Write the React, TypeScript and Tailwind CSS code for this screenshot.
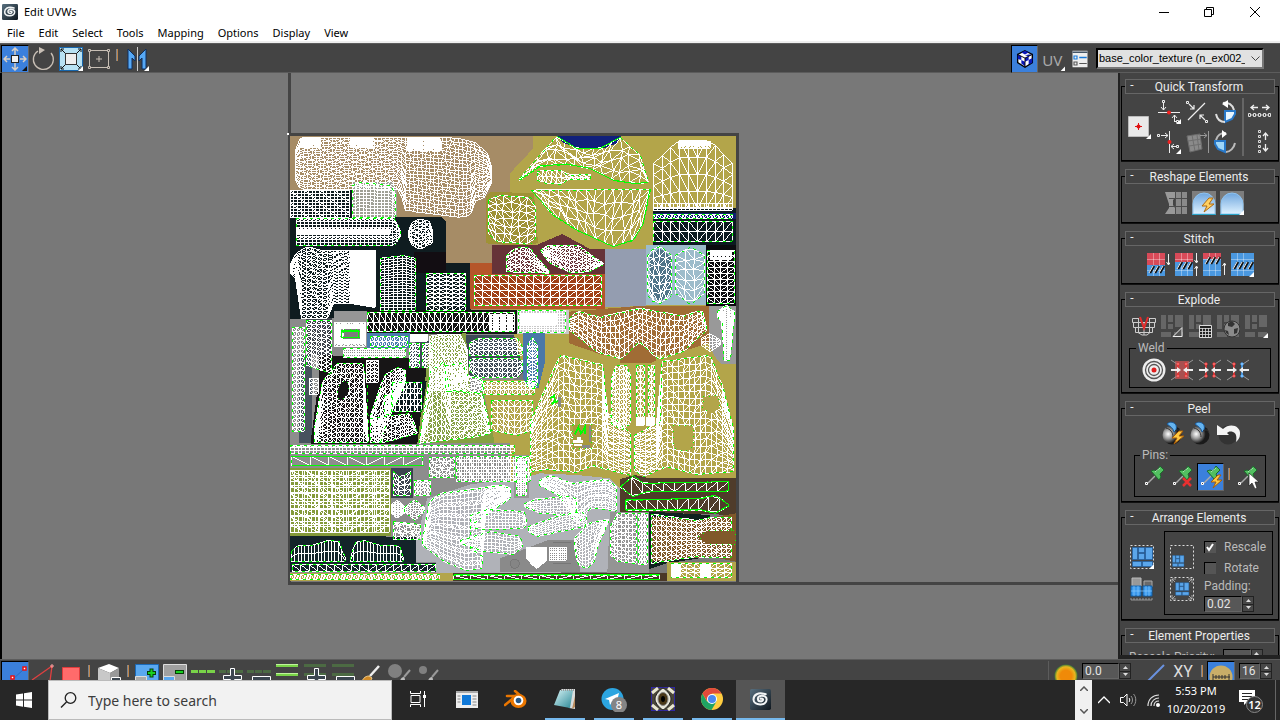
import React from "react";

type Pt = [number, number];
const parse = (s: string): Pt[] => s.split(" ").map((p) => p.split(",").map(Number) as Pt);

function yAt(line: Pt[], x: number) {
  for (let i = 1; i < line.length; i++) {
    if (x <= line[i][0]) {
      const [x0, y0] = line[i - 1];
      const [x1, y1] = line[i];
      return x1 === x0 ? y1 : y0 + ((y1 - y0) * (x - x0)) / (x1 - x0);
    }
  }
  return line[line.length - 1][1];
}

/* A shell is a mesh stretched between an upper and a lower edge.
   origin, upper edge, lower edge, columns, rows, diagonals (every nth cell), green seam, jitter */
type Shell = [string, string, string, number, number, number, number, number];
const ORIGIN: Record<string, string> = {
  A: "translate(0 0)",
  B: "translate(678 0)",
  C: "translate(0 675)",
  D: "translate(678 675)",
};

const SHELLS: Shell[] = [
  ["A", "35,60 50,22 500,22 570,35 610,70 622,110", "35,150 50,178 350,178 358,240 430,250 520,262 560,258 568,215 600,205 622,160", 48, 22, 0, 0, 2],
  ["A", "50,24 110,24", "50,52 110,52", 18, 7, 0, 0, 0],
  ["A", "200,24 270,24", "200,52 270,52", 22, 7, 0, 0, 0],
  ["A", "370,24 470,24", "370,60 470,60", 30, 9, 0, 0, 0],
  ["A", "18,182 195,182", "18,262 195,262", 16, 9, 4, 0, 0],
  ["A", "205,165 225,158 320,165 335,190", "205,262 335,262", 12, 11, 0, 1, 0],
  ["A", "36,265 330,265 348,300", "36,347 330,347 348,320", 26, 9, 3, 1, 0],
  ["A", "36,298 320,298", "36,312 320,312", 90, 4, 0, 0, 0],
  ["A", "372,305 385,275 410,268 435,275 446,300", "372,320 385,350 410,356 446,340", 7, 10, 2, 0, 1],
  ["A", "20,400 45,360 75,350 110,360 275,360", "20,430 36,445 38,565 135,565 140,520 220,520 275,532", 16, 18, 1, 0, 1],
  ["A", "200,365 272,365", "200,520 272,532", 24, 50, 0, 0, 0],
  ["A", "288,385 360,376 395,385", "288,540 395,540", 8, 20, 0, 1, 0],
  ["A", "428,430 545,430", "428,540 545,540", 6, 9, 1, 1, 0],
  ["A", "570,437 953,437", "570,525 953,525", 15, 4, 1, 1, 0],
  ["A", "250,547 690,547", "250,605 690,605", 24, 2, 1, 1, 0],
  ["A", "620,552 690,552", "620,600 690,600", 20, 6, 0, 0, 0],
  ["A", "150,578 245,578", "150,648 245,648", 9, 9, 1, 0, 1],
  ["A", "258,618 370,618", "258,650 370,650", 9, 2, 1, 1, 0],
  ["A", "25,592 62,592", "25,905 62,905", 3, 24, 1, 1, 0],
  ["A", "68,570 142,570", "68,705 142,730", 5, 11, 1, 1, 0],
  ["A", "178,655 365,655", "178,683 365,683", 32, 6, 0, 1, 0],
  ["A", "375,640 405,640", "375,712 405,712", 3, 7, 1, 1, 0],
  ["A", "415,640 445,640", "415,712 445,712", 3, 7, 1, 1, 0],
  ["A", "380,612 430,612", "380,634 430,634", 15, 7, 0, 0, 0],
  ["A", "435,620 470,612 530,612 550,660", "430,780 550,780", 12, 15, 1, 0, 1],
  ["A", "555,640 580,624 700,624 715,650", "555,675 580,675 700,675 715,675", 11, 4, 1, 1, 0],
  ["A", "555,690 580,684 700,684 715,690", "555,720 580,742 700,742 715,720", 11, 4, 1, 1, 0],
  ["A", "612,210 640,196 740,202 753,230", "612,310 640,335 740,342 753,325", 6, 6, 1, 1, 3],
  ["A", "666,375 700,352 735,352 795,425", "666,425 795,430", 9, 6, 1, 1, 1],
  ["B", "28,145 140,20 145,22 200,55 270,55 330,22 390,75 415,158", "28,150 90,108 170,102 240,115 310,150 370,160 415,158", 14, 4, 1, 1, 6],
  ["B", "82,125 110,120 155,122 175,135 240,134", "82,150 110,160 155,162 175,148 240,148", 11, 2, 1, 1, 0],
  ["B", "65,180 420,178", "65,182 130,255 200,300 310,350 370,330 400,280 420,178", 13, 4, 1, 1, 5],
  ["B", "430,100 505,32 600,32 668,100", "430,235 668,235", 9, 4, 1, 0, 0],
  ["B", "505,34 600,34", "505,54 600,54", 12, 3, 1, 0, 0],
  ["B", "430,220 668,220", "430,242 668,242", 20, 2, 0, 0, 0],
  ["B", "430,252 668,252", "430,264 668,264", 22, 1, 1, 1, 0],
  ["B", "430,273 668,273", "430,333 668,333", 9, 2, 1, 1, 0],
  ["B", "90,360 120,345 200,345 280,400", "90,362 120,400 180,428 240,425 280,402", 15, 7, 1, 1, 1],
  ["B", "412,380 422,360 450,350 485,375", "412,485 422,510 450,520 485,495", 4, 6, 1, 1, 2],
  ["B", "497,375 540,350 582,375", "497,490 540,522 582,490", 3, 5, 1, 1, 2],
  ["B", "592,360 672,360", "592,520 672,520", 4, 9, 1, 1, 0],
  ["B", "600,360 665,360", "600,388 665,388", 16, 8, 0, 0, 0],
  ["B", "25,542 165,542", "25,608 165,608", 18, 8, 0, 1, 0],
  ["B", "30,552 140,552", "30,585 140,585", 36, 11, 0, 0, 0],
  ["B", "178,565 205,545 270,562 390,535 520,558 575,540 590,590", "178,600 260,665 335,688 388,635 445,688 520,665 590,600", 30, 7, 2, 1, 1],
  ["B", "575,625 600,610 630,630", "575,645 600,668 630,645", 5, 5, 0, 0, 0],
  ["B", "622,545 650,525 672,545", "622,560 638,580 640,690 660,690 672,560", 12, 30, 0, 1, 0],
  ["B", "52,645 66,622 82,645", "52,770 68,775 82,770", 2, 14, 1, 1, 0],
  ["C", "90,220 115,80 160,25 238,25 250,100 252,260", "90,262 252,262", 12, 16, 1, 1, 1],
  ["C", "258,180 300,60 340,38 365,45", "258,262 290,262 310,195 365,85", 7, 10, 1, 1, 1],
  ["C", "258,190 380,176 400,235", "258,262 300,262 400,235", 11, 6, 1, 1, 1],
  ["C", "248,15 282,15", "248,82 282,82", 3, 6, 1, 0, 0],
  ["C", "325,82 412,82", "325,168 412,168", 8, 5, 2, 1, 0],
  ["C", "302,122 322,122", "302,178 322,178", 4, 8, 0, 1, 0],
  ["C", "405,262 440,50 480,20 495,110 595,115 620,232", "405,264 560,248 620,234", 16, 11, 1, 1, 1],
  ["C", "485,30 535,25 550,60 595,75", "485,108 530,105 560,115 595,110", 10, 8, 2, 1, 2],
  ["C", "598,78 750,78", "598,118 750,118", 12, 3, 1, 1, 0],
  ["C", "622,135 745,135", "622,225 700,240 745,225", 7, 5, 1, 1, 0],
  ["C", "75,70 102,70", "75,118 102,118", 2, 4, 1, 0, 0],
  ["C", "20,270 690,270", "20,295 690,295", 60, 3, 3, 1, 0],
  ["C", "22,305 415,305", "22,332 415,332", 7, 1, 1, 1, 0],
  ["C", "435,308 510,308", "435,368 510,368", 7, 6, 2, 1, 2],
  ["C", "518,305 740,305", "518,380 740,380", 30, 8, 4, 1, 0],
  ["C", "20,345 315,345", "20,532 315,532", 24, 11, 4, 1, 0],
  ["C", "20,345 315,345", "20,532 315,532", 7, 8, 1, 0, 0],
  ["C", "328,350 350,368 378,350", "328,422 378,422", 3, 4, 1, 1, 0],
  ["C", "390,375 440,375", "390,420 440,420", 5, 4, 1, 1, 1],
  ["C", "322,450 340,435 362,455", "322,475 340,490 362,475", 9, 9, 0, 0, 0],
  ["C", "362,458 392,432 422,458", "362,470 392,496 422,470", 7, 7, 0, 1, 1],
  ["C", "328,500 410,508", "328,552 410,552", 8, 6, 3, 1, 3],
  ["C", "22,590 45,570 85,570 140,556 165,560 183,610", "22,620 183,620", 16, 2, 0, 1, 0],
  ["C", "200,610 215,562 240,556 290,572 345,572 358,610", "200,620 358,620", 16, 2, 0, 1, 0],
  ["C", "25,627 455,627", "25,650 455,650", 17, 1, 1, 1, 0],
  ["C", "20,658 465,658", "20,674 465,674", 44, 1, 3, 1, 0],
  ["C", "508,660 1125,660", "508,674 1125,674", 12, 1, 1, 1, 0],
  ["C", "415,555 435,440 470,415 650,390 680,400", "415,570 480,620 545,645 595,640 595,605 560,580 560,510 680,430", 21, 20, 3, 1, 1],
  ["C", "560,480 610,462 720,470 728,500", "560,520 610,522 720,520 728,505", 16, 6, 0, 1, 1],
  ["C", "530,555 620,530 710,545 715,570", "530,565 600,590 690,598 715,575", 16, 6, 0, 1, 1],
  ["D", "62,200 150,0 280,30 290,170 360,235 360,350", "62,350 110,342 200,352 250,332 300,345 360,360", 18, 17, 2, 1, 1],
  ["D", "374,240 450,200 455,20 600,0 640,100 670,220", "374,345 400,365 470,335 560,358 670,350", 18, 17, 2, 1, 1],
  ["D", "305,70 318,30 350,30 362,60", "305,205 335,225 362,205", 5, 13, 1, 1, 0],
  ["D", "380,30 402,30", "380,210 402,210", 2, 10, 1, 1, 0],
  ["D", "414,30 434,30", "414,210 434,210", 2, 10, 1, 1, 0],
  ["D", "380,188 402,188", "380,210 402,210", 8, 8, 0, 0, 0],
  ["D", "408,186 432,186", "408,210 432,210", 8, 8, 0, 0, 0],
  ["D", "20,308 50,308", "20,420 50,420", 6, 18, 0, 1, 0],
  ["D", "88,375 120,362 190,385 290,372 318,395 318,470", "88,390 150,425 200,510 240,460 290,462 318,470", 22, 12, 3, 1, 1],
  ["D", "42,445 80,432 170,425 200,430", "42,455 90,475 200,480", 16, 6, 0, 1, 1],
  ["D", "55,515 150,480 215,470 230,480", "55,530 80,545 150,530 225,515", 17, 7, 0, 1, 1],
  ["D", "192,550 235,505 295,492", "192,575 205,630 230,640 250,625 265,570 295,500", 12, 12, 0, 1, 1],
  ["D", "302,510 325,475 378,475", "302,600 325,620 378,625", 7, 13, 2, 1, 0],
  ["D", "386,475 412,475", "386,628 412,628", 3, 12, 1, 1, 0],
  ["D", "48,578 110,578", "48,610 80,642 110,615", 18, 18, 0, 0, 0],
  ["D", "118,578 170,578", "118,615 170,615", 9, 7, 0, 0, 0],
  ["D", "425,478 560,495 600,488 665,488", "425,625 560,605 600,608 665,608", 16, 9, 1, 1, 1],
  ["D", "332,395 370,362 400,385 655,380", "332,397 370,425 410,410 655,408", 10, 1, 1, 1, 0],
  ["D", "348,435 575,430 615,420 658,450", "348,465 575,465 615,475 658,452", 10, 1, 1, 1, 0],
  ["D", "485,625 665,625", "485,668 665,668", 8, 3, 1, 1, 0],
  ["D", "485,628 512,628", "485,665 512,665", 8, 12, 0, 0, 0],
  ["D", "570,628 600,628", "570,665 600,665", 8, 12, 0, 0, 0],
];

const snap = (v: number) => Math.floor(v / 3) * 3 + 1.5;

function shellPaths(s: Shell) {
  const [, a, b, cols, rows, diag, , jit] = s;
  const top = parse(a);
  const bot = parse(b);
  const x0 = top[0][0];
  const x1 = top[top.length - 1][0];
  const grid: Pt[][] = [];
  for (let c = 0; c <= cols; c++) {
    const col: Pt[] = [];
    for (let r = 0; r <= rows; r++) {
      const inner = c > 0 && c < cols && r > 0 && r < rows ? jit : 0;
      const x = x0 + ((x1 - x0) * c) / cols;
      const t = yAt(top, x);
      const y = t + ((yAt(bot, x) - t) * r) / rows;
      col.push([snap(x + Math.sin(c * 3.7 + r * 5.1) * inner), snap(y + Math.cos(c * 4.3 + r * 2.9) * inner)]);
    }
    grid.push(col);
  }
  const fmt = (pts: Pt[]) => "M" + pts.map((p) => p[0] + " " + p[1]).join("L");
  let d = grid.map(fmt).join("");
  for (let r = 0; r <= rows; r++) d += fmt(grid.map((c) => c[r]));
  if (diag)
    for (let c = 0; c < cols; c++)
      for (let r = 0; r < rows; r++) {
        if ((c * 3 + r * 5) % diag) continue;
        d += c < cols / 2 ? fmt([grid[c][r], grid[c + 1][r + 1]]) : fmt([grid[c + 1][r], grid[c][r + 1]]);
      }
  const seam = fmt([...top, ...bot.slice().reverse()].map((p) => [snap(p[0]), snap(p[1])] as Pt)) + "Z";
  return { d, seam };
}

const FILLS: [string, string, string][] = [
  ["A", "#a68c66", "18,18 690,18 690,560 18,560"],
  ["B", "#b3a54a", "0,18 678,18 678,690 0,690"],
  ["B", "#a68c66", "0,18 70,18 70,55 0,130"],
  ["A", "#9f9236", "620,185 750,190 762,340 690,346 606,340 606,200"],
  ["B", "#10207c", "143,18 335,18 320,40 280,55 240,57 190,50 160,38"],
  ["A", "#0f1c20", "18,180 205,180 205,262 475,262 486,275 486,400 560,400 560,545 18,570"],
  ["A", "#120d12", "390,365 486,365 486,430 390,430"],
  ["A", "#9fa095", "205,155 325,155 340,180 340,262 205,262"],
  ["A", "#8b8b8b", "18,568 690,540 690,690 18,690"],
  ["A", "#141414", "250,540 700,540 700,612 250,612"],
  ["A", "#969696", "150,542 250,542 250,650 150,650"],
  ["A", "#4c7cae", "250,610 378,610 378,655 250,655"],
  ["A", "#3f434b", "66,565 145,565 145,690 66,690"],
  ["B", "#0c1a20", "428,235 678,235 678,345 428,345"],
  ["B", "#0f2070", "428,250 678,250 678,268 428,268"],
  ["B", "#663338", "-54,345 80,345 157,312 240,357 285,357 285,432 -54,432"],
  ["B", "#b5562a", "-120,400 -54,400 -54,432 285,432 285,537 -120,537"],
  ["B", "#a03f16", "-105,440 275,440 275,520 -105,520"],
  ["B", "#949db0", "285,357 408,357 408,528 285,532"],
  ["B", "#9dbccb", "408,345 588,345 588,525 408,525"],
  ["B", "#4f7488", "420,375 450,355 482,380 482,490 450,515 420,490"],
  ["B", "#0b0b0f", "588,345 678,345 678,528 588,528"],
  ["B", "#c9c9c9", "22,540 178,540 178,612 22,612"],
  ["B", "#a06c35", "178,545 300,535 390,528 597,528 597,640 430,690 320,690 178,640"],
  ["B", "#999999", "597,528 678,528 678,705 630,700 597,650"],
  ["C", "#8d8d8d", "18,0 690,0 690,660 18,660"],
  ["C", "#48525e", "45,0 85,0 85,265 45,265"],
  ["C", "#171516", "80,260 105,70 105,0 375,10 430,30 430,100 400,266 80,266"],
  ["C", "#3e4a57", "375,-35 555,-60 690,-60 720,50 700,70 555,70 430,40 375,40"],
  ["C", "#85a043", "430,20 435,-60 545,-65 560,110 595,110 632,235 632,265 400,265"],
  ["C", "#b3a54a", "590,75 740,75 740,330 690,265 632,265 620,200"],
  ["C", "#0d1c21", "322,78 428,78 415,170 322,170"],
  ["C", "#849a3a", "18,338 322,338 322,543 18,543"],
  ["C", "#3d4450", "322,338 387,338 387,430 322,430"],
  ["C", "#14242a", "18,543 395,545 395,625 455,625 455,652 18,652"],
  ["C", "#b0b2b8", "395,560 430,430 560,388 690,370 690,655 455,655 455,620 395,620"],
  ["C", "#b3a54a", "18,653 508,653 508,678 18,678"],
  ["D", "#b3a54a", "62,0 678,0 678,400 0,400 0,250 62,220"],
  ["B", "#a06c35", "330,660 430,660 440,690 420,700 330,700"],
  ["D", "#999999", "610,0 678,0 678,28 635,28"],
  ["D", "#4a78a8", "38,-65 105,-65 105,20 85,100 60,100 38,70"],
  ["D", "#b0b2b8", "0,380 90,355 200,360 300,370 330,400 330,650 -20,655 -20,380"],
  ["D", "#969696", "12,300 58,300 58,428 12,428"],
  ["D", "#8a8a8a", "-30,610 115,555 210,555 210,652 -30,652"],
  ["D", "#949494", "300,470 418,470 418,655 292,655"],
  ["D", "#4f3c2a", "330,372 375,360 420,370 678,370 678,480 330,470"],
  ["D", "#10221f", "418,470 600,480 600,605 470,625 418,642"],
  ["D", "#80592a", "425,485 560,495 678,475 678,620 600,605 425,620"],
  ["D", "#b3a54a", "470,622 678,622 678,678 470,678"],
  ["D", "#4a3828", "-170,655 470,655 470,678 -170,678"],
];

const HOLES: [string, string, string][] = [
  ["D", "#b3a54a", "490,212 550,212 550,270 535,288 500,285 490,265"],
  ["D", "#b3a54a", "580,125 625,122 628,160 605,175 578,160"],
  ["D", "#a8993e", "188,210 245,210 245,280 188,280"],
  ["C", "#171516", "160,110 172,80 190,78 195,110 175,135 162,130"],
  ["D", "#80592a", "565,545 590,528 678,528 678,568 590,568"],
  ["A", "#7c7c7c", "180,598 228,598 228,628 180,628"],
];

function UvMap() {
  return (
    <svg className="h-full w-full" aria-label="UV layout" role="img" shapeRendering="crispEdges">
      <g transform="translate(-2 -73)">
        <path d="M289.500 73V584M288 134.500H739M737.500 133V584M288 583H1120" stroke="#444" strokeWidth="3" fill="none" />
        <g transform="translate(284 130) scale(0.333333)">
          {FILLS.map(([o, c, p], i) => (
            <polygon key={i} points={p} fill={c} transform={ORIGIN[o]} />
          ))}
          {SHELLS.map((s, i) => {
            const { d, seam } = shellPaths(s);
            return (
              <g key={i} transform={ORIGIN[s[0]]} fill="none" strokeWidth="3">
                <path d={d} stroke="#fff" />
                {s[6] ? <path d={seam} stroke="#0f0" strokeDasharray="9 12" /> : null}
              </g>
            );
          })}
          {HOLES.map(([o, c, p], i) => (
            <polygon key={i} points={p} fill={c} stroke="#0f0" strokeWidth="3" strokeDasharray="3 15" transform={ORIGIN[o]} />
          ))}
          <g fill="none" strokeWidth="3" transform={ORIGIN.B} stroke="#0f0">
            <path d="M28 150L90 108L170 102L240 115L310 150L370 160L415 158M65 182L130 255L200 300L310 350L370 330L400 280L420 178" />
            <path d="M143 20L200 55L270 55L330 22" />
          </g>
          <g fill="none" strokeWidth="3" transform={ORIGIN.D} stroke="#0f0">
            <path d="M332 397L370 362L400 385L655 380V408L410 410L370 425zM348 435L575 430L615 420L658 450L615 475L575 465H348z" />
          </g>
          <path d="M510 1335H1128M510 1350H1128M24 980H420M24 1007H420" stroke="#0f0" strokeWidth="3" />
          <g fill="none" strokeWidth="5" transform={ORIGIN.D}>
            <path d="M195 238l10-22 8 20 12-20v20M120 130l12-8 4 20 12-8M125 148l12-12" stroke="#0f0" />
            <path d="M190 260h30M192 270h25M200 250h12" stroke="#fff" strokeWidth="8" />
            <path d="M240 212v50M215 274h25M148 125v30" stroke="#888" strokeWidth="8" />
            <circle cx="14" cy="626" r="14" stroke="#777" fill="#858585" strokeWidth="3" />
            <path d="M130 563h52M130 625h52" stroke="#777" strokeWidth="3" />
          </g>
          <path d="M160 590h75v45h-75z" fill="none" stroke="#fff" strokeWidth="14" />
          <path d="M172 603h52v20h-52z" fill="none" stroke="#0f0" strokeWidth="4" />
        </g>
        <rect x="287" y="133" width="2" height="2" fill="#fff" />
      </g>
    </svg>
  );
}

function Ico({ children, s = 24 }: { children: React.ReactNode; s?: number }) {
  return (
    <svg width={s} height={s} viewBox="0 0 24 24" fill="none" className="block shrink-0" aria-hidden="true">
      {children}
    </svg>
  );
}
const Corner = () => <path d="M24 19v5h-5z" fill="#fff" />;

function Tool({ label, children, on, cls = "w-7" }: { label: string; children: React.ReactNode; on?: boolean; cls?: string }) {
  return (
    <button
      type="button"
      aria-label={label}
      title={label}
      className={`flex h-7 shrink-0 items-center justify-center ${cls} ${on ? "border border-b-[#666] border-l-black border-r-[#666] border-t-black bg-[#3b80dc]" : ""}`}
    >
      {children}
    </button>
  );
}
const Bar = () => (
  <svg width="2" height="12" className="mb-2 shrink-0" aria-hidden="true">
    <path d="M.5 0v12" stroke="#7d8791" />
    <path d="M1.500 0v12" stroke="#c08448" />
  </svg>
);

const MaxLogo = ({ s }: { s: number }) => (
  <svg width={s} height={s} viewBox="0 0 24 24" aria-hidden="true">
    <defs>
      <linearGradient id="mx" x2="1" y2="1">
        <stop stopColor="#587080" />
        <stop offset="1" stopColor="#0f171e" />
      </linearGradient>
    </defs>
    <rect width="24" height="24" rx="2" fill="url(#mx)" />
    <path d="M18 6C9 3 4 7 4 12c0 7 15 8 15 0 0-5-10-6-10-1 0 4 6 4 6 1 0-1-2-1-3-1" fill="none" stroke="#f2f5f6" strokeWidth="2.300" strokeLinecap="round" />
  </svg>
);

/* ---- toolbar icons ---- */
const Move = (
  <Ico>
    <path d="M12 1v7M12 16v7M1 12h6M17 12h6M9 4l3-3 3 3M9 20l3 3 3-3M4 9l-3 3 3 3M20 9l3 3-3 3" stroke="#d9cfc4" strokeWidth="1.500" />
    <rect x="8.500" y="8.500" width="7" height="7" fill="#f2f2f2" stroke="#222" />
    <path d="M24 19v5h-5z" fill="#111" />
  </Ico>
);
const Rotate = (
  <Ico>
    <path d="M7 4a10 10 0 1 0 13 2" stroke="#c8bfb5" strokeWidth="1.300" />
    <path d="M8 0l6 3-6 4z" fill="#c8bfb5" />
  </Ico>
);
const Scale = (
  <Ico>
    <rect x=".5" y=".5" width="23" height="23" fill="#b8e2f4" stroke="#1767ae" />
    <rect x="6.500" y="6.500" width="11" height="11" fill="#eee" stroke="#333" />
    <path d="M2 5V2h3M19 2h3v3M2 19v3h3M19 22h3v-3M2 2l4 4M22 2l-4 4M2 22l4-4M22 22l-4-4" stroke="#111" />
    <Corner />
  </Ico>
);
const Free = (
  <Ico>
    <path d="M2.500 3.500h19v17h-19zM12 9v6M9 12h6" stroke="#c8bfb5" />
    <path d="M1.500 2.500h2v2h-2zM20.500 2.500h2v2h-2zM1.500 19.500h2v2h-2zM20.500 19.500h2v2h-2z" fill="#444" stroke="#c8bfb5" />
  </Ico>
);
const Mirror = (
  <Ico>
    <path d="M3 2l7 7v5l-3-3v11H3zM21 2l-7 7v5l3-3v11h4z" fill="#56a8f5" stroke="#0c2f60" />
    <path d="M12.500 0v24" stroke="#ccc" />
    <Corner />
  </Ico>
);
const Cube = (
  <Ico s={22}>
    <path d="M12 3l8 4v9l-8 5-8-5V7z" fill="#fff" stroke="#000" strokeWidth="1.500" />
    <path d="M12 3l4 2-4 2-4-2zM4 7l4 2v4l-4-1zM8 13l4 2v5l-4-3zM12 11l4-2v4l-4 2zM16 13l4-2v5l-4 2zM16 7l4 0-4 2-4-1z" fill="#0b18b8" />
    <path d="M4 7l8 4 8-4M12 11v10" stroke="#000" />
  </Ico>
);
const ListIco = (
  <Ico s={18}>
    <path d="M2 1h20v22H2z" fill="#eee" />
    <path d="M2 3h20" stroke="#456" strokeWidth="2" />
    <path d="M4 8h4v4H4z" stroke="#1678d8" strokeWidth="1.500" />
    <path d="M11 10h10" stroke="#1678d8" strokeWidth="2" />
    <path d="M4 16h4v4H4zM11 18h10" stroke="#555" strokeWidth="1.500" />
  </Ico>
);

/* ---- quick transform ---- */
const Pivot = (
  <Ico>
    <path d="M1.500 1.500h20v20h-20z" fill="#e9e9e9" stroke="#bbb" />
    <path d="M11.500 8v7M8 11.500h7" stroke="#e01010" />
    <circle cx="11.500" cy="11.500" r="2" fill="#e01010" />
    <Corner />
  </Ico>
);
const AlignH = (
  <Ico>
    <path d="M1 12.500h22M6.500 3v7M4 7l2.500 3L9 7M17.500 22v-7M15 18l2.500-3 2.500 3M18 21.500h3" stroke="#eee" />
    <path d="M5.500.5h2v2h-2zM19.500 20.500h2v2h-2z" fill="#444" stroke="#eee" />
    <circle cx="12" cy="12.500" r="2" fill="#f02020" />
    <Corner />
  </Ico>
);
const AlignV = (
  <Ico>
    <path d="M12.500 1v22M4 5.500h7M8 3l3 2.500L8 8M22 16.500h-8M17 14l-3 2.500 3 2.500" stroke="#eee" />
    <path d="M.5 4.500h2v2h-2zM19.500 15.500h2v2h-2z" fill="#444" stroke="#eee" />
    <circle cx="12.500" cy="12" r="2" fill="#f02020" />
    <Corner />
  </Ico>
);
const Linear = (
  <Ico>
    <path d="M3 20L20 3M4 4l5 5M9 5v4H5M20 20l-5-5M15 19v-4h4" stroke="#eee" strokeWidth="1.200" />
    <path d="M1.500 1.500h2v2h-2zM20.500 20.500h2v2h-2z" fill="#444" stroke="#eee" />
  </Ico>
);
const TurnL = (
  <Ico>
    <path d="M12 11h10v3l-3 5-7 3z" fill="#e7f5ff" stroke="#2878c8" strokeWidth="2" />
    <path d="M21 10a9 9 0 0 0-11-7M3 14c1 5 4 8 9 8" stroke="#ddd" strokeWidth="2" />
    <path d="M9 4l6-4v8z" fill="#fff" />
  </Ico>
);
const TurnR = (
  <Ico>
    <path d="M12 11H2v3l3 5 7 3z" fill="#9ed6f8" stroke="#2878c8" strokeWidth="2" />
    <path d="M3 10a9 9 0 0 1 10-7M22 13c-1 5-5 9-9 9" stroke="#bbb" strokeWidth="2" />
    <path d="M14 4L9 0v8z" fill="#fff" />
  </Ico>
);
const Warp = (
  <Ico>
    <path d="M2 6l13-2 2 15-12 3z" fill="#8a8a8a" stroke="#6a6a6a" />
    <path d="M7 5l3 16M12 5l2 15M3 11l13-2M4 16l13-2" stroke="#6f6f6f" />
    <path d="M15 5.500h7M19 3l3 2.500-3 2.500M23.500 1v22" stroke="#999" />
  </Ico>
);
const SpaceH = (
  <Ico>
    <path d="M10 7.500H3M6 5L3 7.500 6 10M14 7.500h7M18 5l3 2.500-3 2.500" stroke="#eee" strokeWidth="1.300" />
    <path d="M.5 13.500h2v3h-2zM5.500 13.500h2v3h-2zM10.500 13.500h2v3h-2zM15.500 13.500h2v3h-2zM20.500 13.500h2v3h-2zM3 15h2M8 15h2M13 15h2M18 15h2" stroke="#ddd" />
  </Ico>
);
const SpaceV = (
  <Ico>
    <path d="M17.500 10V3M15 6l2.500-3L20 6M17.500 14v7M15 18l2.500 3 2.500-3" stroke="#eee" strokeWidth="1.300" />
    <path d="M10.500.5h2v2h-2zM10.500 5.500h2v2h-2zM10.500 10.500h2v2h-2zM10.500 15.500h2v2h-2zM10.500 20.500h2v2h-2z" stroke="#ddd" />
  </Ico>
);

/* ---- reshape ---- */
const Straighten = (
  <Ico>
    <path d="M1 1h10v6l-2 2v5l2 3v6H1l4-6v-4z" fill="#999" />
    <path d="M12 1h11v22H12z" fill="#8a8a8a" />
    <path d="M5 7.500h18M5 15.500h18M17.500 1v22M11.500 0v24" stroke="#4c4c4c" />
  </Ico>
);
const Dome = ({ bolt }: { bolt?: boolean }) => (
  <Ico>
    <defs>
      <linearGradient id="dm" x2="0" y2="1">
        <stop stopColor="#6fa6de" />
        <stop offset="1" stopColor="#dff2ff" />
      </linearGradient>
    </defs>
    <path d="M0 0h24v24H0z" fill="#7d7d7d" />
    <path d="M1 23V13a11 11 0 0 1 22 0v10z" fill="url(#dm)" stroke="#8fc4f0" />
    <path d="M0 23.500h24" stroke="#2ba4c8" />
    {bolt ? <path d="M17 7l-7 8h5l-3 6 10-8h-5l4-6z" fill="#ffd060" stroke="#b06a10" /> : <Corner />}
  </Ico>
);

/* ---- stitch ---- */
const StitchIco = ({ m }: { m: number }) => {
  const w = m === 3 ? 23 : 18;
  const cut = [12, 9, 6, 0][m];
  const y = [20, 16, 11, 16][m];
  const marks = `M3 ${y}l4-7M8 ${y}l4-7M13 ${y}l4-7${m === 3 ? `M18 ${y}l4-7` : ""}`;
  return (
    <Ico>
      <path d={`M1 0h${w}v${cut}H1z`} fill="#d84a58" />
      <path d={`M1 ${cut}h${w}V23H1z`} fill="#4a98e0" />
      <path d={`M7.500 0v23M13.500 0v23M1 6.500h${w}M1 17.500h${w}`} stroke="#fff" opacity=".35" />
      <path d={marks} stroke="#111" strokeWidth="2.500" transform="translate(1 0)" />
      <path d={marks} stroke="#eee" />
      {m === 0 && <path d="M22.500 1v11M20.500 9l2 3 2-3" stroke="#eee" />}
      {m === 1 && <path d="M22.500 0v10M20.500 7l2 3 2-3M22.500 23V13M20.500 16l2-3 2 3" stroke="#eee" />}
      {m === 2 && <path d="M22.500 22V10M20.500 13l2-3 2 3" stroke="#eee" />}
      {m === 3 && <Corner />}
    </Ico>
  );
};

/* ---- explode ---- */
const Basket = (
  <Ico>
    <path d="M.5 4.500h6v4h-6zM17.500 4.500h6v4h-6zM1.500 8.500h21v5h-21zM3.500 13.500h17v5h-17zM6.500 4v15M12 9v12M17.500 4v15M6 18.500l4 2.500h5l3-2.500" stroke="#ccc" />
    <path d="M8 3l4 11 4-11" stroke="#e32b2b" strokeWidth="2" />
  </Ico>
);
const Blocks = ({ k }: { k: number }) => (
  <Ico>
    <path d="M1 1h5v14H1zM8 1h5v7H8zM15 1h8v12h-8zM8 10h5v5H8zM1 18h10v5H1zM14 18h9v5h-9z" fill="#666" />
    {k === 0 && <path d="M13 22.500l9-9v9z" fill="#555" stroke="#eee" />}
    {k === 1 && (
      <>
        <path d="M11.500 11.500h12v12h-12z" fill="#222" stroke="#ddd" />
        <path d="M11 14.500h12M11 17.500h12M11 20.500h12M14.500 14v9M17.500 14v9M20.500 14v9" stroke="#ddd" strokeWidth=".8" />
      </>
    )}
    {k === 2 && (
      <>
        <circle cx="16" cy="15" r="8" fill="#8a8a8a" stroke="#333" />
        <path d="M12 9l4-2 3 3-3 3-4-1zM9 16l3 1 1 4-3-2zM18 15l4-1-1 5-3 1z" fill="#333" />
      </>
    )}
    {k === 3 && <Corner />}
  </Ico>
);
const Target = (
  <Ico>
    <circle cx="12" cy="12" r="11.500" fill="#eee" />
    <circle cx="12" cy="12" r="8.500" stroke="#555" strokeWidth="1.300" />
    <circle cx="12" cy="12" r="5.500" stroke="#555" strokeWidth="1.300" />
    <circle cx="12" cy="12" r="2.500" fill="#e02020" />
  </Ico>
);
const Weld = ({ k }: { k: number }) => (
  <Ico>
    {k === 0 && <path d="M5 3h14v18H5z" fill="#a85050" />}
    <path d="M1 2l6 4M1 22l6-4M23 2l-6 4M23 22l-6-4" stroke="#999" />
    <path d="M8 6v12" stroke="#f03030" strokeWidth="1.500" />
    <path d="M16 6v12" stroke={k === 2 ? "#4aa8ff" : "#f03030"} strokeWidth="1.500" />
    <path d="M7 5h2v2H7zM7 17h2v2H7z" fill="#fff" stroke="#f03030" />
    <path d="M15 5h2v2h-2zM15 17h2v2h-2z" fill="#fff" stroke={k === 2 ? "#4aa8ff" : "#f03030"} />
    <path d="M1 11h6V9l4 3-4 3v-2H1zM23 11h-6V9l-4 3 4 3v-2h6z" fill="#eee" />
  </Ico>
);

/* ---- peel ---- */
const Ball = ({ k }: { k: number }) => (
  <Ico>
    <defs>
      <radialGradient id="bl" cx=".3" cy=".45">
        <stop stopColor="#fff" />
        <stop offset=".5" stopColor="#999" />
        <stop offset="1" stopColor="#1a1a1a" />
      </radialGradient>
    </defs>
    <circle cx="11" cy="14" r="9.500" fill={k === 2 ? "#333" : "url(#bl)"} />
    {k < 2 && <path d="M6 3c3-3 7-2 9 1 1 3 0 6-2 7-1-4-3-5-7-8z" fill="#65b4f0" stroke="#1b5c9c" />}
    {k < 2 && <path d="M5 7c4 1 7 4 7 9M14 10c3-2 5-1 6 2" stroke="#333" />}
    {k === 0 && <path d="M18 10l-7 7h5l-3 6 10-8h-5l4-5z" fill="#ffc840" stroke="#a85c08" />}
    {k === 2 && <path d="M6 8c7-7 18-3 17 5 0 4-2 6-4 8 1-6 0-9-3-10-3-1-5 0-6 1l2 2H0V4z" fill="#f4f4f4" />}
  </Ico>
);
const Pin = ({ k }: { k: number }) => (
  <Ico>
    <path d="M5 18l7-7" stroke="#aaa" strokeWidth="1.500" />
    <path d="M2.500 17.500h2v2h-2z" fill="#444" stroke="#fff" />
    <path d="M8 6l3-1 3 1 3-5 4 4-4 4 1 3-2 3z" fill="#52c060" stroke="#1c6a2c" />
    <path d="M12 7l5-4" stroke="#a8f0b0" />
    {k === 1 && <path d="M12 13l8 8M20 13l-8 8" stroke="#e83030" strokeWidth="2.500" />}
    {k === 2 && <path d="M19 10l-7 7h5l-3 6 9-8h-5l4-5z" fill="#ffc840" stroke="#a85c08" />}
    {k === 3 && <path d="M13 8v13l3-3 3 6 2-1-2-6h4z" fill="#fff" stroke="#222" strokeWidth=".7" />}
  </Ico>
);

/* ---- arrange ---- */
const DashBox = <rect x=".5" y=".5" width="23" height="23" stroke="#ddd" strokeDasharray="2 2" />;
const Pack = ({ k }: { k: number }) => {
  const tiles = <path d="M1 1h5v12H1zM7 1h6v5H7zM14 1h7v12h-7zM7 7h6v6H7zM1 15h9v5H1zM11 15h10v5H11z" fill="#5ba6ea" stroke="#1d5fa5" strokeWidth=".7" />;
  return (
    <Ico>
      {DashBox}
      {k === 0 && <g transform="translate(1.500 1.500)">{tiles}</g>}
      {k === 1 && <g transform="translate(2 10) scale(.57)">{tiles}</g>}
      {k === 2 && <g transform="translate(5 5) scale(.66)">{tiles}</g>}
      {k === 2 && <path d="M2 6V2h4M18 2h4v4M2 18v4h4M18 22h4v-4M2 2l3 3M22 2l-3 3M2 22l3-3M22 22l-3-3" stroke="#bbb" strokeWidth=".8" />}
      {k === 0 && <Corner />}
    </Ico>
  );
};
const Ruler = (
  <Ico>
    <path d="M2 1h9v8H2z" fill="#999" stroke="#bbb" />
    <path d="M14 4h8v6h-8z" fill="#6a6a6a" stroke="#aaa" />
    <path d="M1 9h10v10H1zM13 9h9v10h-9z" fill="#3a98ec" stroke="#0f5aa0" />
    <path d="M4 9v10M8 9v10M16 9v10M19 9v10M1 14h21" stroke="#8accff" strokeWidth=".7" />
    <path d="M1 21v2h21v-2M4 23v-2M7 23v-2M10 23v-2M13 23v-2M16 23v-2M19 23v-2" stroke="#aaa" strokeWidth=".8" />
  </Ico>
);

/* ---- selection bar ---- */
const Vert = <Ico><path d="M22 5L8 18" stroke="#2a6ac0" /><path d="M20 4h3v3h-3zM8 13h3v3H8z" fill="#fff" stroke="#f01010" strokeWidth="1.500" /></Ico>;
const Edge = <Ico><path d="M21 3L1 17M21 3l-2 15" stroke="#e04040" strokeWidth="1.300" /><path d="M20 2h2v2h-2z" stroke="#ffa0a0" /></Ico>;
const Face = <Ico><path d="M3.500 4.500h17V24h-17z" fill="#ff6b6b" stroke="#e03c3c" /></Ico>;
const Solid = (
  <Ico>
    <path d="M1 5l11-4 10 4-9 5z" fill="#fff" /><path d="M1 5l12 5v14L1 17z" fill="#c8c8c8" /><path d="M13 10l9-5v13l-9 6z" fill="#999" />
    <path d="M14.500 14.500h9v6h-9z" fill="#3c4650" stroke="#fff" />
  </Ico>
);
const Grow = ({ minus }: { minus?: boolean }) => (
  <Ico>
    <path d="M.5 1.500h23v22H.5z" fill={minus ? "#a0a0a0" : "#5aa8f0"} stroke={minus ? "#ddd" : "#1b6ab8"} />
    <path d="M.5 13.500h11v9H.5z" fill={minus ? "#5aa8f0" : "#aaa"} stroke="#ddd" />
    <path d={minus ? "M12 9h9" : "M12 10h9M16.500 5.500v9"} stroke="#063c06" strokeWidth="4" />
    <path d={minus ? "M13 9h7" : "M13 10h7M16.500 6.500v7"} stroke="#18d020" strokeWidth="2" />
  </Ico>
);
const Loop = ({ dbl, k }: { dbl?: boolean; k: number }) => {
  const c = k ? "#4c6a43" : "#79d348";
  return (
    <Ico>
      {dbl ? <path d="M1 2.500h22M1 11.500h22" stroke={c} strokeWidth="3" /> : <path d="M0 8.500h7M8 8.500h7M16 8.500h8" stroke={c} strokeWidth="3" />}
      {dbl && !k && <path d="M1 1.500h22M1 10.500h22" stroke="#c0f29c" />}
      {k === 1 && <path d="M11.500 5.500h4v7h7v4h-7v7h-4v-7h-7v-4h7z" fill="#3c4650" stroke="#fff" />}
      {k === 2 && <path d="M5.500 13.500h18v4h-18z" fill="#3c4650" stroke="#fff" />}
    </Ico>
  );
};
const Brush = ({ k }: { k: number }) => (
  <Ico>
    {k === 1 && <circle cx="8" cy="8" r="7" fill="#808080" />}
    {k === 2 && <circle cx="8" cy="7" r="4" fill="#808080" />}
    {k === 0 ? (
      <>
        <path d="M11 13l9-10" stroke="#eee" strokeWidth="2.500" />
        <path d="M2 22c1-6 4-9 8-9l3 2c-2 5-5 7-11 7z" fill="#d08a28" stroke="#f6d08a" />
      </>
    ) : (
      <>
        <path d="M17 14l6-7" stroke="#999" strokeWidth="2" />
        <path d="M13 19c0-3 2-5 4-5l1 2c0 2-2 3-5 3z" fill="#bbb" />
      </>
    )}
  </Ico>
);

function Rollout({ title, children, cls }: { title: string; children: React.ReactNode; cls: string }) {
  return (
    <fieldset className="min-w-0 shrink-0 border border-black px-[3px] shadow-[0_1px_0_#111]">
      <legend className="w-full">
        <button type="button" className="flex h-[15px] w-full items-center border border-[#666] bg-[#424242] text-[12px] leading-3 text-[#ececec]">
          <span className="w-5 shrink-0 pb-1 pr-2">-</span>
          <span className="flex-1 pr-[22px] text-center">{title}</span>
        </button>
      </legend>
      <div className={cls}>{children}</div>
    </fieldset>
  );
}

function Spinner({ label, value, w }: { label: string; value: string; w: string }) {
  return (
    <div className="flex h-4 items-stretch">
      <input aria-label={label} defaultValue={value} className={`${w} min-w-0 rounded-none border border-b-[#666] border-l-black border-r-[#666] border-t-black bg-[#575757] px-[2px] text-[12px] leading-3 text-[#e4e4e4] outline-none`} />
      <div className="flex w-3 flex-col border border-[#222] bg-[#484848]">
        <button type="button" aria-label={label + " up"} className="flex flex-1 items-center justify-center">
          <svg width="5" height="3"><path d="M0 3L2.500 0 5 3z" fill="#ddd" /></svg>
        </button>
        <button type="button" aria-label={label + " down"} className="flex flex-1 items-center justify-center border-t border-[#222]">
          <svg width="5" height="3"><path d="M0 0h5L2.500 3z" fill="#ddd" /></svg>
        </button>
      </div>
    </div>
  );
}

function Check({ label, checked }: { label: string; checked?: boolean }) {
  return (
    <label className="flex h-[21px] items-center gap-2">
      <span className="grid h-3 w-3">
        <input type="checkbox" defaultChecked={checked} className="peer col-start-1 row-start-1 h-3 w-3 appearance-none border-l border-t border-black bg-[#555]" />
        <svg width="12" height="12" fill="none" className="pointer-events-none col-start-1 row-start-1 hidden peer-checked:block">
          <path d="M3 6l2 3 4-6" stroke="#fff" strokeWidth="2" />
        </svg>
      </span>
      {label}
    </label>
  );
}

function TextureSelect() {
  return (
    <div className="grid w-[168px] items-center">
      <select aria-label="Texture" className="col-start-1 row-start-1 h-[21px] w-full appearance-none overflow-hidden rounded-none border-2 border-b-[#777] border-l-black border-r-[#777] border-t-black bg-[#e1e1e1] pl-px pr-[17px] font-['Liberation_Sans'] text-[11px] text-black">
        <option>base_color_texture (n_ex002_)</option>
      </select>
      <svg className="pointer-events-none col-start-1 row-start-1 mr-1 justify-self-end" width="9" height="6" fill="none"><path d="M.5.5l4 4 4-4" stroke="#444" /></svg>
    </div>
  );
}

const TaskApp = ({ label, open, active, children }: { label: string; open?: boolean; active?: boolean; children: React.ReactNode }) => (
  <button type="button" aria-label={label} className={`flex h-10 w-[49px] shrink-0 flex-col items-center ${active ? "bg-[#555]" : ""}`}>
    <span className="flex h-[38px] items-center">{children}</span>
    {open && <span className={`h-[2px] bg-[#76b9ed] ${active ? "w-full" : "w-10"}`} />}
  </button>
);

const MENUS = ["File", "Edit", "Select", "Tools", "Mapping", "Options", "Display", "View"];

export default function App() {
  return (
    <div className="flex h-screen flex-col overflow-hidden bg-[#444] font-['Roboto',sans-serif] text-[12px] text-[#ddd]">
      <header className="flex h-[23px] shrink-0 items-center bg-white text-black">
        <span className="ml-[2px] mr-[6px]"><MaxLogo s={16} /></span>
        <h1 className="flex-1 font-['Noto_Sans'] text-[11px] leading-4">Edit UVWs</h1>
        <button type="button" aria-label="Minimize" className="flex h-full w-[45px] items-center justify-center"><svg width="10" height="10"><path d="M0 5.500h10" stroke="#000" /></svg></button>
        <button type="button" aria-label="Restore" className="flex h-full w-[45px] items-center justify-center"><svg width="10" height="10" fill="none"><path d="M.5 2.500h7v7h-7zM2.500 2V.5h7v7H8" stroke="#000" /></svg></button>
        <button type="button" aria-label="Close" className="flex h-full w-[49px] items-center justify-center pr-px"><svg width="10" height="10"><path d="M0 0l10 10M10 0L0 10" stroke="#000" /></svg></button>
      </header>
      <nav className="flex h-5 shrink-0 items-center gap-[14px] border-b-2 border-[#eee] bg-white pl-[7px] pt-px font-['Noto_Sans'] text-[11px] leading-4 text-black">
        {MENUS.map((m) => <button type="button" key={m}>{m}</button>)}
      </nav>
      <div className="flex h-[30px] shrink-0 items-center border-b border-t border-[#5c5c5c] pl-px pr-[16px] pt-px">
        <Tool label="Move" on>{Move}</Tool>
        <Tool label="Rotate">{Rotate}</Tool>
        <Tool label="Scale">{Scale}</Tool>
        <Tool label="Freeform">{Free}</Tool>
        <span className="w-[3px]" />
        <Bar />
        <span className="w-[5px]" />
        <Tool label="Mirror">{Mirror}</Tool>
        <div className="flex-1" />
        <Tool label="Show map" on cls="w-[27px]">{Cube}</Tool>
        <Tool label="UV space" cls="w-7">
          <Ico s={26}><text x="3" y="18" fontSize="14" fill="#aaa" fontFamily="Noto Sans">UV</text><path d="M24 19v4h-4z" fill="#fff" /></Ico>
        </Tool>
        <Tool label="Options dialog">{ListIco}</Tool>
        <span className="w-[2px]" />
        <TextureSelect />
      </div>

      <main className="flex min-h-0 flex-1">
        <section className="min-w-0 flex-1 border-l-2 border-black bg-[#787878]"><UvMap /></section>
        <aside className="flex w-[162px] shrink-0 flex-col gap-2 overflow-hidden border-b-4 border-l-2 border-[#222] bg-[#444] px-[1px] pt-[6px]">
          <Rollout title="Quick Transform" cls="flex h-[66px] items-center">
            <Tool label="Set pivot">{Pivot}</Tool>
            <div className="ml-[2px] grid grid-cols-3 gap-y-[2px]">
              <Tool label="Align horizontally">{AlignH}</Tool>
              <Tool label="Linear align">{Linear}</Tool>
              <Tool label="Rotate left">{TurnL}</Tool>
              <Tool label="Align vertically">{AlignV}</Tool>
              <Tool label="Align to edge">{Warp}</Tool>
              <Tool label="Rotate right">{TurnR}</Tool>
            </div>
            <span className="ml-[3px] mr-[2px] h-[58px] w-[2px] bg-[#666]" />
            <div className="grid gap-y-[2px]">
              <Tool label="Space horizontally">{SpaceH}</Tool>
              <Tool label="Space vertically">{SpaceV}</Tool>
            </div>
          </Rollout>
          <Rollout title="Reshape Elements" cls="flex h-[38px] items-center justify-center pl-2">
            <Tool label="Straighten">{Straighten}</Tool>
            <Tool label="Relax"><Dome bolt /></Tool>
            <Tool label="Relax custom"><Dome /></Tool>
          </Rollout>
          <Rollout title="Stitch" cls="flex h-[37px] items-center justify-center">
            {["Stitch to target", "Stitch to average", "Stitch to source", "Stitch custom"].map((l, i) => <Tool key={l} label={l}><StitchIco m={i} /></Tool>)}
          </Rollout>
          <Rollout title="Explode" cls="flex h-[85px] flex-col pt-[5px]">
            <div className="flex justify-center">
              <Tool label="Break">{Basket}</Tool>
              {["Flatten by angle", "Flatten by smoothing", "Flatten by material", "Flatten custom"].map((l, i) => <Tool key={l} label={l}><Blocks k={i} /></Tool>)}
            </div>
            <fieldset className="mx-1 border border-black">
              <legend className="ml-[6px] px-[2px] text-[12px] leading-4 text-[#bbb]">Weld</legend>
              <div className="flex h-[31px] items-start pl-[10px]">
                <Tool label="Target weld">{Target}</Tool>
                {["Weld selected", "Weld all", "Weld mixed"].map((l, i) => <Tool key={l} label={l}><Weld k={i} /></Tool>)}
              </div>
            </fieldset>
          </Rollout>
          <Rollout title="Peel" cls="flex h-[85px] flex-col pt-[3px]">
            <div className="flex justify-center pl-[2px]">
              {["Quick peel", "Peel mode", "Reset peel"].map((l, i) => <Tool key={l} label={l}><Ball k={i} /></Tool>)}
            </div>
            <fieldset className="mx-[9px] border border-black">
              <legend className="ml-[5px] px-[2px] text-[12px] leading-4 text-[#bbb]">Pins:</legend>
              <div className="flex h-[33px] items-start pl-[6px]">
                <Tool label="Pin"><Pin k={0} /></Tool>
                <Tool label="Unpin"><Pin k={1} /></Tool>
                <Tool label="Auto pin" on cls="w-[27px]"><Pin k={2} /></Tool>
                <span className="mx-1 pt-[5px]"><Bar /></span>
                <Tool label="Select pinned"><Pin k={3} /></Tool>
              </div>
            </fieldset>
          </Rollout>
          <Rollout title="Arrange Elements" cls="flex h-[94px] items-start pt-[6px]">
            <div className="flex w-[33px] flex-col gap-1 pl-[3px] pt-3">
              <Tool label="Pack custom"><Pack k={0} /></Tool>
              <Tool label="Rescale elements">{Ruler}</Tool>
            </div>
            <div className="ml-[6px] flex h-[84px] w-[109px] border border-black">
              <div className="flex w-[34px] flex-col gap-1 pl-[3px] pt-[11px]">
                <Tool label="Pack together"><Pack k={1} /></Tool>
                <Tool label="Pack normalize"><Pack k={2} /></Tool>
              </div>
              <div className="flex flex-col pl-[5px] pt-1 text-[#bbb]">
                <Check label="Rescale" checked />
                <Check label="Rotate" />
                <span className="h-[18px] leading-4">Padding:</span>
                <Spinner label="Padding" value="0.02" w="w-[38px]" />
              </div>
            </div>
          </Rollout>
          <Rollout title="Element Properties" cls="flex h-10 items-start gap-2 pl-1 pt-[6px]">
            <span className="whitespace-nowrap leading-4 text-[#bbb]">Rescale Priority:</span>
            <Spinner label="Rescale priority" value="" w="w-7" />
          </Rollout>
        </aside>
      </main>

      <div className="flex h-[21px] shrink-0 items-start overflow-hidden border-t border-[#5c5c5c] pl-px pt-px">
        <Tool label="Vertex" on>{Vert}</Tool>
        <Tool label="Edge">{Edge}</Tool>
        <Tool label="Polygon">{Face}</Tool>
        <span className="ml-[3px] mr-[5px] pt-1"><Bar /></span>
        <Tool label="Select by element">{Solid}</Tool>
        <span className="mx-1 pt-1"><Bar /></span>
        <Tool label="Grow"><Grow /></Tool>
        <Tool label="Shrink"><Grow minus /></Tool>
        <Tool label="Loop"><Loop k={0} /></Tool>
        <Tool label="Grow loop"><Loop k={1} /></Tool>
        <Tool label="Shrink loop"><Loop k={2} /></Tool>
        <Tool label="Ring"><Loop dbl k={0} /></Tool>
        <Tool label="Grow ring"><Loop dbl k={1} /></Tool>
        <Tool label="Shrink ring"><Loop dbl k={2} /></Tool>
        <Tool label="Paint select"><Brush k={0} /></Tool>
        <Tool label="Larger brush"><Brush k={1} /></Tool>
        <Tool label="Smaller brush"><Brush k={2} /></Tool>
        <div className="flex-1" />
        <div className="flex items-start border-l border-[#5c5c5c] pl-[3px] pr-2">
          <Tool label="Soft selection">
            <Ico>
              <defs><radialGradient id="sf"><stop offset=".5" stopColor="#f08a08" /><stop offset=".8" stopColor="#e8b820" /><stop offset="1" stopColor="#3c7a38" /></radialGradient></defs>
              <circle cx="12" cy="13" r="11.500" fill="url(#sf)" />
            </Ico>
          </Tool>
          <span className="ml-[2px] mr-[10px] pt-[2px]"><Spinner label="Falloff" value="0.0" w="w-[37px]" /></span>
          <Tool label="Linear falloff"><Ico><path d="M4 19L21 2" stroke="#6a92e0" strokeWidth="2" /></Ico></Tool>
          <button type="button" className="h-4 w-7 pt-[2px] text-center text-[16px] leading-[18px] text-[#ddd]">XY</button>
          <span className="ml-[4px] mr-[4px] pt-1"><Bar /></span>
          <Tool label="Limit by edges" on>
            <Ico><circle cx="12" cy="14" r="11.500" fill="#c9ae68" /><path d="M4 14h17M4 11v6M7 12v4M10 12v4M13 12v4M16 12v4M20 11v6" stroke="#333" /><path d="M14 18h9v4h-9z" fill="#dde" /></Ico>
          </Tool>
          <span className="ml-1 pt-[2px]"><Spinner label="Edge limit" value="16" w="w-[21px]" /></span>
        </div>
      </div>

      <footer className="flex h-10 shrink-0 items-stretch bg-[#272727] font-['Noto_Sans'] text-white">
        <button type="button" aria-label="Start" className="flex w-12 items-center justify-center">
          <svg width="16" height="16" fill="#fff"><path d="M0 2.500L7 1.400V7.500H0zM8 1.200L16 0v7.500H8zM0 8.500h7v6.200L0 13.600zM8 8.500h8V16l-8-1.200z" /></svg>
        </button>
        <label className="mr-px flex w-[344px] items-center border border-[#bbb] bg-[#f2f2f2] pl-[11px]">
          <svg width="17" height="17" fill="none" aria-hidden="true"><circle cx="10.500" cy="6" r="5.300" stroke="#222" strokeWidth="1.300" /><path d="M6.500 10L1 15.500" stroke="#222" strokeWidth="1.500" /></svg>
          <input aria-label="Search" placeholder="Type here to search" className="ml-[11px] min-w-0 flex-1 bg-transparent text-[14px] outline-none placeholder:text-[#3c3c3c]" />
        </label>
        <TaskApp label="Task view">
          <svg width="16" height="16" fill="none"><path d="M1 4.500h9v7H1zM.5 0v2.500h10V0M.5 16v-2.500h10V16M14.500 0v16" stroke="#fff" /><path d="M13 4h3v3h-3z" fill="#fff" /></svg>
        </TaskApp>
        <TaskApp label="Reader">
          <svg width="22" height="17"><path d="M0 0h22v17H0z" fill="#eee" /><path d="M0 1h22" stroke="#aaa" strokeWidth="2" /><path d="M6 4h9v10H6z" fill="#0f78d8" /><path d="M1.500 5h3M1.500 8h3M1.500 11h3M16.500 5h4M16.500 8h4M16.500 11h4M16.500 14h4" stroke="#888" /></svg>
        </TaskApp>
        <TaskApp label="Blender">
          <svg width="23" height="19" fill="none"><path d="M1 15L12 6H3M11 1l7 6" stroke="#ea7600" strokeWidth="2.600" strokeLinecap="round" /><ellipse cx="14.500" cy="11" rx="8" ry="7" fill="#ea7600" /><circle cx="14.500" cy="10.500" r="4.800" fill="#fff" /><circle cx="14.500" cy="10.500" r="2.800" fill="#265787" /></svg>
        </TaskApp>
        <TaskApp label="Notepad" open>
          <svg width="24" height="22"><defs><linearGradient id="np" x2="1" y2="1"><stop stopColor="#d8f4f6" /><stop offset="1" stopColor="#2a8896" /></linearGradient></defs><path d="M8 1h14v20l-6-1z" fill="#d8dcdc" /><path d="M7 2l13 0-3 18L1 17z" fill="url(#np)" /><path d="M8 2h13" stroke="#999" strokeWidth="2" strokeDasharray="1 1" /><path d="M19 21l3-2V8z" fill="#b98b5c" /></svg>
        </TaskApp>
        <TaskApp label="Telegram" open>
          <svg width="26" height="26"><circle cx="11.500" cy="13" r="11" fill="#2ca5e0" /><path d="M4 13l14-6-3 12-4-3-2 3-1-5z" fill="#fff" /><circle cx="18" cy="19" r="8" fill="#858585" /><text x="18" y="23" fontSize="11" fill="#fff" textAnchor="middle" fontFamily="Noto Sans">8</text></svg>
        </TaskApp>
        <TaskApp label="Game" open>
          <svg width="24" height="24" fill="none"><path d="M0 0h24v24H0z" fill="#4a4638" stroke="#2a20c0" strokeWidth="1.500" /><path d="M1 6l6-5M23 6l-6-5M1 18l6 5M23 18l-6 5" stroke="#e8e6d0" strokeWidth="3" /><path d="M12 1C7 4 4 9 4 12s3 8 8 11c5-3 8-8 8-11s-3-8-8-11z" fill="#e8e6d8" stroke="#222" /><ellipse cx="12" cy="12" rx="5" ry="6.500" fill="#4a3818" stroke="#888" /><ellipse cx="12" cy="12" rx="2" ry="3" fill="#000" /></svg>
        </TaskApp>
        <TaskApp label="Chrome" open>
          <svg width="22" height="22" viewBox="0 0 22 22"><circle cx="11" cy="11" r="11" fill="#ffcd40" /><path d="M11 11L6.200 13.700 1.500 5.500A11 11 0 0 0 10.500 22l5-8.500z" fill="#1fa463" /><path d="M1.500 5.500A11 11 0 0 1 20.500 5.500H11L6 13z" fill="#e24a3b" /><circle cx="11" cy="11" r="5" fill="#fff" /><circle cx="11" cy="11" r="4" fill="#4a88f0" /></svg>
        </TaskApp>
        <TaskApp label="3ds Max" open active><MaxLogo s={21} /></TaskApp>
        <div className="flex-1" />
        <div className="flex w-[17px] flex-col items-center justify-between bg-[#f0f0f0] py-[6px]">
          <svg width="8" height="5" fill="none"><path d="M0 5l4-4 4 4" stroke="#555" strokeWidth="1.500" /></svg>
          <svg width="8" height="5" fill="none"><path d="M0 0l4 4 4-4" stroke="#555" strokeWidth="1.500" /></svg>
        </div>
        <button type="button" aria-label="Hidden icons" className="flex w-6 items-center justify-center"><svg width="12" height="8" fill="none"><path d="M0 7l6-6 6 6" stroke="#fff" strokeWidth="1.300" /></svg></button>
        <button type="button" aria-label="Volume" className="flex w-6 items-center justify-center">
          <svg width="17" height="14" fill="none"><path d="M.5 4.500h3L7 1v12L3.500 9.500h-3z" stroke="#fff" /><path d="M9 5c1 1 1 3 0 4" stroke="#fff" /><path d="M11 3c2 2 2 6 0 8M13.500 1c3 3 3 9 0 12" stroke="#999" /></svg>
        </button>
        <button type="button" aria-label="Network" className="flex w-[26px] items-center justify-center">
          <svg width="13" height="13" fill="none"><path d="M1 12C1 5 6 1 12 1M4 12c0-5 4-8 8-8M7 12c0-3 2-5 5-5" stroke="#ddd" strokeWidth="1.200" /><circle cx="11" cy="11" r="2" fill="#fff" /></svg>
        </button>
        <div className="flex w-[60px] flex-col items-center justify-center pb-px text-[11px] leading-[18px]"><span>5:53 PM</span><span>10/20/2019</span></div>
        <button type="button" aria-label="Notifications" className="ml-3 mr-[11px] flex items-center">
          <svg width="26" height="26" fill="none"><path d="M1 3h16v12H9l-3 3v-3H1z" fill="#fff" /><path d="M4 6.500h10M4 9.500h10M4 12.500h6" stroke="#272727" /><circle cx="16.500" cy="17.500" r="8" fill="#333" stroke="#888" /><text x="16.500" y="22" fontSize="11" fontWeight="600" fill="#fff" textAnchor="middle" fontFamily="Noto Sans">12</text></svg>
        </button>
        <span className="mr-1 w-px bg-[#666]" />
      </footer>
    </div>
  );
}
